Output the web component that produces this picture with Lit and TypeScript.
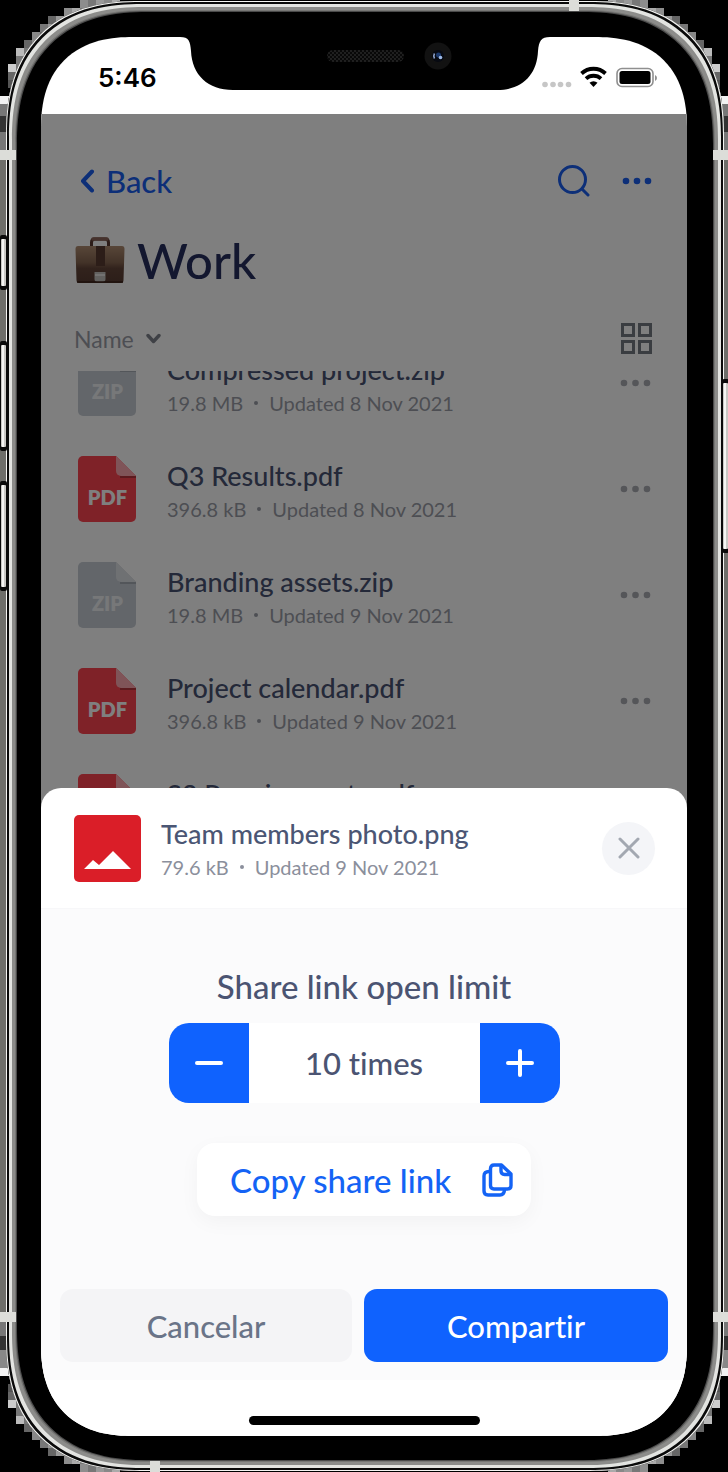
import { LitElement, html, css, svg } from "lit";
import { customElement, property, state } from "lit/decorators.js";

type FileKind = "pdf" | "zip";

interface FileEntry {
  name: string;
  size: string;
  updated: string;
  kind: FileKind;
}

const FILES: FileEntry[] = [
  { name: "Compressed project.zip", size: "19.8 MB", updated: "Updated 8 Nov 2021", kind: "zip" },
  { name: "Q3 Results.pdf", size: "396.8 kB", updated: "Updated 8 Nov 2021", kind: "pdf" },
  { name: "Branding assets.zip", size: "19.8 MB", updated: "Updated 9 Nov 2021", kind: "zip" },
  { name: "Project calendar.pdf", size: "396.8 kB", updated: "Updated 9 Nov 2021", kind: "pdf" },
  { name: "S3 Requirements.pdf", size: "396.8 kB", updated: "Updated 9 Nov 2021", kind: "pdf" },
];

const metaStyles = css`
  .meta {
    display: flex;
    align-items: center;
    gap: 11px;
    font-size: 20px;
    line-height: 32px;
  }
  .dot {
    width: 4px;
    height: 4px;
    border-radius: 50%;
    background: currentColor;
  }
`;

@customElement("file-row")
export class FileRow extends LitElement {
  @property({ attribute: false }) file!: FileEntry;

  static styles = [
    metaStyles,
    css`
      :host {
        display: flex;
        align-items: flex-start;
        height: 106px;
        box-sizing: border-box;
        padding: 20px 36px 0 37px;
      }
      .icon {
        flex: none;
        width: 58px;
        height: 66px;
        margin-right: 31px;
      }
      .label {
        font: 800 20px Lato, sans-serif;
      }
      .text {
        flex: 1;
        padding-top: 3px;
      }
      .name {
        font-size: 27px;
        font-weight: 500;
        line-height: 34px;
        color: #485272;
      }
      .meta {
        color: #9a9da7;
      }
      .more {
        display: block;
        border: 0;
        padding: 0;
        margin-top: 18px;
        height: 30px;
        background: none;
      }
      svg {
        display: block;
      }
      .more svg {
        width: 31px;
        height: 30px;
        fill: #aaacb3;
      }
    `,
  ];

  render() {
    const pdf = this.file.kind === "pdf";
    return html`
      <svg class="icon" viewBox="0 0 58 66" aria-hidden="true">
        <path d="M5 0H38L58 20V61a5 5 0 0 1-5 5H5a5 5 0 0 1-5-5V5a5 5 0 0 1 5-5z" fill=${pdf ? "#ff4450" : "#c6ccd4"} />
        <path d="M38 0L58 20H43a5 5 0 0 1-5-5z" fill=${pdf ? "#ffa8b0" : "#dfe2e6"} />
        <path d="M42 21H58" stroke=${pdf ? "#9a2e36" : "#9a9fa6"} stroke-width="1.4" />
        <text class="label" x="29.500" y="49" text-anchor="middle" fill=${pdf ? "#fff" : "#eff1f3"}>${this.file.kind.toUpperCase()}</text>
      </svg>
      <div class="text">
        <div class="name">${this.file.name}</div>
        <div class="meta"><span>${this.file.size}</span><i class="dot"></i><span>${this.file.updated}</span></div>
      </div>
      <button class="more" aria-label="More options">
        <svg viewBox="0 0 31 30"><circle cx="4" cy="15" r="3.300" /><circle cx="15.500" cy="15" r="3.300" /><circle cx="27" cy="15" r="3.300" /></svg>
      </button>
    `;
  }
}

@customElement("phone-notch")
export class PhoneNotch extends LitElement {
  static styles = css`
    :host {
      display: block;
    }
    svg {
      display: block;
      margin: 0 auto;
    }
  `;

  render() {
    return html`
      <svg width="370" height="55" viewBox="0 0 370 55" aria-hidden="true">
        <defs>
          <pattern id="mesh" width="4" height="4" patternUnits="userSpaceOnUse">
            <rect width="4" height="4" fill="#080808" />
            <circle cx="1" cy="1" r="0.900" fill="#2a2a2a" />
            <circle cx="3" cy="3" r="0.900" fill="#2a2a2a" />
          </pattern>
        </defs>
        <path d="M0 0H370V1C361 1 359 5 358 15C357 39 342 54 317 54H53C28 54 12 39 11 15C10 5 9 1 0 1z" />
        <rect x="147" y="14" width="77" height="12" rx="6" fill="url(#mesh)" />
        <circle cx="258" cy="20" r="13.500" fill="#121212" />
        <circle cx="258" cy="20" r="6" fill="#070a12" />
        <path d="M254.500 17.500q-1.500 2.500 0 5" stroke="#8ba0c8" stroke-width="1.600" fill="none" />
        <circle cx="258.500" cy="19" r="2.500" fill="#1c3a6e" />
        <circle cx="260.500" cy="21.500" r="1.800" fill="#9db9e6" />
      </svg>
    `;
  }
}

@customElement("app-root")
export class AppRoot extends LitElement {
  @state() private limit = 10;

  static styles = [
    metaStyles,
    css`
      :host {
        display: block;
        background: #000;
        font-family: Lato, "Noto Sans", sans-serif;
        font-variant-ligatures: none;
      }
      svg {
        display: block;
      }
      button {
        font-family: inherit;
        font-variant-ligatures: inherit;
        border: 0;
        margin: 0;
        padding: 0;
        background: none;
        cursor: pointer;
      }
      .stage {
        position: relative;
        padding: 1px 4px 1px 6px;
      }
      .backdrop {
        position: absolute;
        inset: 0;
        width: 100%;
        height: 100%;
      }
      .phone {
        position: relative;
        padding: 36px 37px 35px 35px;
        border-radius: 118px;
        background: #000;
        box-shadow:
          inset 0 0 0 1px #f4f4f2,
          inset 0 0 0 3px #0a0a0a,
          inset 0 0 0 6px #e3e4e1,
          inset 0 0 0 9px #8c8c8a,
          inset 0 0 0 10px #777775,
          inset 0 0 0 11px #4a4a4a;
      }
      .notch {
        position: absolute;
        top: 35px;
        left: 0;
        right: 0;
      }
      .screen {
        display: flex;
        flex-direction: column;
        overflow: hidden;
        border-radius: 80px;
        background: #fff;
      }
      @supports (corner-shape: superellipse(1.25)) {
        .phone {
          border-radius: 134px;
          corner-shape: superellipse(1.25);
        }
        .screen {
          border-radius: 92px;
          corner-shape: superellipse(1.25);
        }
      }
      .status {
        display: flex;
        align-items: center;
        height: 77px;
        box-sizing: border-box;
        padding: 4px 30px 0 57px;
      }
      .time {
        flex: 1;
        font: 600 26px/30px Inter, sans-serif;
        color: #000;
      }
      .app {
        position: relative;
        display: flex;
        flex-direction: column;
        background: #fff;
      }
      .scrim {
        position: absolute;
        inset: 0;
        background: rgba(0, 0, 0, 0.5);
      }
      .nav {
        display: flex;
        align-items: center;
        height: 60px;
        padding: 37px 35px 0 38px;
        color: #1a5ff0;
      }
      .back {
        display: flex;
        align-items: center;
        gap: 11px;
        margin-right: auto;
        font-size: 31px;
        font-weight: 500;
        line-height: 36px;
        color: inherit;
        text-decoration: none;
      }
      .nav button {
        color: inherit;
      }
      .search {
        margin-right: 32px;
      }
      .heading {
        display: flex;
        align-items: center;
        gap: 12px;
        height: 60px;
        padding: 19px 33px 2px 34px;
      }
      .title {
        margin: 0;
        font-size: 49px;
        font-weight: 500;
        line-height: 60px;
        color: #262f5e;
      }
      .sort {
        display: flex;
        justify-content: space-between;
        align-items: center;
        height: 65px;
        padding: 14px 35px 0 33px;
      }
      .sort-by {
        display: flex;
        align-items: center;
        gap: 12px;
        font-size: 23px;
        line-height: 30px;
        color: #9a9da7;
      }
      .files {
        height: 437px;
        overflow: hidden;
      }
      .files-inner {
        margin-top: -41px;
      }
      .sheet {
        position: relative;
        margin-top: -20px;
        border-radius: 20px 20px 0 0;
        background: #fff;
      }
      .sheet-head {
        display: flex;
        align-items: center;
        height: 120px;
        padding: 0 32px 0 33px;
        border-bottom: 1px solid #f7f7f9;
      }
      .sheet-text {
        flex: 1;
        margin-left: 20px;
        padding-top: 4px;
      }
      .sheet-name {
        margin: 0;
        font-size: 27px;
        font-weight: 500;
        line-height: 34px;
        color: #4b5674;
      }
      .meta {
        color: #8b8f9c;
      }
      .close {
        display: grid;
        place-items: center;
        width: 53px;
        height: 53px;
        border-radius: 50%;
        background: #f4f5f8;
      }
      .sheet-body {
        display: flex;
        flex-direction: column;
        align-items: center;
        padding: 56px 19px 18px;
        background: #fbfbfc;
      }
      .limit-label {
        font-size: 33px;
        font-weight: 500;
        line-height: 42px;
        color: #4b5472;
      }
      .stepper {
        display: flex;
        width: 391px;
        height: 80px;
        margin-top: 16px;
        overflow: hidden;
        border-radius: 20px;
        background: #fff;
      }
      .step {
        display: grid;
        place-items: center;
        width: 80px;
        background: #0f62fe;
      }
      .value {
        flex: 1;
        text-align: center;
        font-size: 31px;
        font-weight: 500;
        line-height: 80px;
        color: #4b5472;
      }
      .copy {
        display: flex;
        align-items: center;
        justify-content: space-between;
        width: 334px;
        height: 73px;
        margin-top: 40px;
        padding: 0 18px 0 33px;
        border-radius: 18px;
        background: #fff;
        box-shadow: 0 6px 20px rgba(0, 0, 0, 0.04);
        font-size: 33px;
        font-weight: 500;
        color: #1463f5;
      }
      .actions {
        display: flex;
        gap: 12px;
        align-self: stretch;
        margin-top: 73px;
      }
      .action {
        flex: 292;
        height: 73px;
        border-radius: 13px;
        background: #f4f4f6;
        font-size: 31px;
        font-weight: 500;
        color: #6a7488;
      }
      .primary {
        flex: 304;
        background: #0f62fe;
        color: #fff;
      }
      .home {
        display: flex;
        justify-content: center;
        padding: 36px 0 11px;
      }
      .home-bar {
        width: 231px;
        height: 9px;
        border-radius: 5px;
        background: #000;
      }
    `,
  ];

  /* Stepped pixels behind the rounded corners and along the sides. */
  private renderBackdrop() {
    const steps: [number, number, string][] = [
      [80, 0, "#8d8d8d"], [88, 0, "#777"], [96, 0, "#999"], [104, 0, "#888"], [112, 0, "#aaa"],
      [64, 8, "#8d8d8d"], [72, 8, "#aaa"], [80, 8, "#777"],
      [48, 16, "#666"], [56, 16, "#999"], [64, 16, "#777"],
      [40, 24, "#777"], [48, 24, "#999"],
      [32, 32, "#888"], [40, 32, "#666"],
      [24, 40, "#666"], [32, 40, "#8d8d8d"],
      [16, 48, "#bbb"], [24, 48, "#777"],
      [16, 56, "#777"],
      [8, 64, "#ccc"], [16, 64, "#777"],
      [8, 72, "#666"], [8, 80, "#555"],
    ];
    const corner = () => steps.map(([x, y, c]) => svg`<rect x=${x} y=${y} width="8" height="8" fill=${c} />`);
    return html`
      <svg class="backdrop" viewBox="0 0 728 1472" preserveAspectRatio="none" aria-hidden="true">
        <g>${corner()}</g>
        <g transform="translate(728 0) scale(-1 1)">${corner()}</g>
        <g transform="translate(0 1472) scale(1 -1)">${corner()}</g>
        <g transform="translate(728 1472) scale(-1 -1)">${corner()}</g>
        <rect y="96" width="728" height="1280" fill="#6e6e6a" />
        <rect y="96" width="728" height="8" fill="#f2f2f2" />
        <rect y="104" width="728" height="12" fill="#777" />
        <rect y="116" width="728" height="16" fill="#333" />
        <rect y="132" width="728" height="18" fill="#777" />
        <rect y="1322" width="728" height="14" fill="#777" />
        <rect y="1336" width="728" height="14" fill="#333" />
        <rect y="1350" width="728" height="18" fill="#888" />
        <rect y="1368" width="728" height="8" fill="#f2f2f2" />
      </svg>
    `;
  }

  /* Side keys and antenna bands that sit over the metal edge. */
  private renderHardware() {
    const key = (x: number, y: number, h: number) => svg`
      <rect x=${x} y=${y} width="7" height=${h} rx="2" fill="#0a0a0a" />
      <rect x=${x + 1} y=${y + 4} width="5" height=${h - 8} rx="1" fill="#c9c8c4" />
      <rect x=${x + 2} y=${y + 4} width="2" height=${h - 8} fill="#f5f5f3" />`;
    return html`
      <svg class="backdrop" viewBox="0 0 728 1472" preserveAspectRatio="none" aria-hidden="true">
        ${key(0, 235, 55)} ${key(0, 341, 110)} ${key(0, 481, 110)} ${key(722, 379, 174)}
        <g fill="#dcddd9">
          <rect x="0" y="150" width="16" height="10" />
          <rect x="713" y="150" width="15" height="10" />
          <rect x="0" y="1312" width="16" height="10" />
          <rect x="713" y="1312" width="15" height="10" />
          <rect x="569" y="0" width="10" height="11" />
          <rect x="150" y="1461" width="10" height="11" />
        </g>
      </svg>
    `;
  }

  private renderStatus() {
    return html`
      <div class="status">
        <span class="time">5:46</span>
        <svg width="116" height="24" viewBox="0 0 116 24" role="img" aria-label="Wi-Fi connected, battery full">
          <g fill="#c6c6c6"><circle cx="4" cy="18.500" r="2.800" /><circle cx="12" cy="18.500" r="2.800" /><circle cx="19.500" cy="18.500" r="2.800" /><circle cx="27.500" cy="18.500" r="2.800" /></g>
          <g fill="none" stroke="#000" stroke-width="3.800">
            <path d="M40.500 7.500a17.500 17.500 0 0 1 24 0" />
            <path d="M45 12.700a11 11 0 0 1 15 0" />
          </g>
          <path d="M52.500 21l-4-4.300a6 6 0 0 1 8 0z" />
          <rect x="76" y="2.500" width="36" height="18" rx="5" fill="none" stroke="#8f8f8f" stroke-width="1.600" />
          <rect x="78.500" y="5" width="31" height="13" rx="2.500" />
          <path d="M114 9q2 1 2 3t-2 3z" fill="#8f8f8f" />
        </svg>
      </div>
    `;
  }

  private renderBriefcase() {
    return html`
      <svg width="50" height="46" viewBox="0 0 50 46" aria-hidden="true">
        <defs>
          <linearGradient id="leather" x1="0" y1="0" x2="0" y2="1">
            <stop offset="0" stop-color="#b08d72" /><stop offset="0.450" stop-color="#856550" /><stop offset="0.600" stop-color="#64463a" /><stop offset="1" stop-color="#583c32" />
          </linearGradient>
        </defs>
        <path d="M16.500 9V5.500Q16.500 2 20 2H30Q33.500 2 33.500 5.500V9" fill="none" stroke="#5a3a32" stroke-width="3" />
        <path d="M18 2H32" stroke="#8d655a" stroke-width="3.500" stroke-linecap="round" />
        <path d="M3 9H47Q49.500 9 49.500 12L48.500 43Q48.500 46 46 46H4Q1.500 46 1.500 43L.5 12Q.5 9 3 9z" fill="url(#leather)" />
        <rect x="21" y="9" width="9" height="20" fill="#583a30" />
        <path d="M19.500 35H30.500V42Q30.500 45 27.500 45H22.500Q19.500 45 19.500 42z" fill="#c5c3bf" />
        <path d="M20 38H30" stroke="#efeeeb" stroke-width="1.600" />
        <path d="M2 45H48" stroke="#3c231a" stroke-width="1.500" />
      </svg>
    `;
  }

  render() {
    return html`
      <div class="stage">
        ${this.renderBackdrop()}
        <div class="phone">
          <main class="screen">
            ${this.renderStatus()}
            <section class="app">
              <nav class="nav">
                <a class="back" href="#">
                  <svg width="16" height="24" viewBox="0 0 16 24" fill="none" stroke="currentColor" stroke-width="4" stroke-linecap="round" stroke-linejoin="round"><path d="M13 2.500L4 12L13 21.500" /></svg>
                  Back
                </a>
                <button class="search" aria-label="Search">
                  <svg width="32" height="32" viewBox="0 0 32 32" fill="none" stroke="currentColor" stroke-width="3" stroke-linecap="round"><circle cx="14.500" cy="14.500" r="13" /><path d="M24 24L30 30" /></svg>
                </button>
                <button aria-label="More">
                  <svg width="30" height="30" viewBox="0 0 30 30" fill="currentColor"><circle cx="4" cy="15" r="3.300" /><circle cx="15" cy="15" r="3.300" /><circle cx="26" cy="15" r="3.300" /></svg>
                </button>
              </nav>
              <header class="heading">${this.renderBriefcase()}<h1 class="title">Work</h1></header>
              <div class="sort">
                <button class="sort-by">Name
                  <svg width="15" height="11" viewBox="0 0 15 11" fill="none" stroke="#7f838c" stroke-width="3.400" stroke-linecap="round" stroke-linejoin="round"><path d="M2 2.500L7.500 8.500L13 2.500" /></svg>
                </button>
                <button aria-label="Grid view">
                  <svg width="31" height="31" viewBox="0 0 31 31" fill="none" stroke="#757a83" stroke-width="3">
                    <rect x="1.500" y="1.500" width="11" height="11" /><rect x="18.500" y="1.500" width="11" height="11" /><rect x="1.500" y="18.500" width="11" height="11" /><rect x="18.500" y="18.500" width="11" height="11" />
                  </svg>
                </button>
              </div>
              <div class="files"><div class="files-inner">${FILES.map((file) => html`<file-row .file=${file}></file-row>`)}</div></div>
              <div class="scrim"></div>
            </section>
            <section class="sheet" role="dialog" aria-label="Share">
              <header class="sheet-head">
                <svg width="67" height="67" viewBox="0 0 67 67" aria-hidden="true"><rect width="67" height="67" rx="5" fill="#da1e28" /><path d="M10 54L19 45L25 50L39 36L57 54z" fill="#fff" /></svg>
                <div class="sheet-text">
                  <h2 class="sheet-name">Team members photo.png</h2>
                  <div class="meta"><span>79.6 kB</span><i class="dot"></i><span>Updated 9 Nov 2021</span></div>
                </div>
                <button class="close" aria-label="Close">
                  <svg width="22" height="22" viewBox="0 0 22 22" stroke="#a3a8b1" stroke-width="3" stroke-linecap="round"><path d="M2 2L20 20M20 2L2 20" /></svg>
                </button>
              </header>
              <div class="sheet-body">
                <span class="limit-label" id="limit-label">Share link open limit</span>
                <div class="stepper" role="group" aria-labelledby="limit-label">
                  <button class="step" aria-label="Decrease" @click=${() => (this.limit = Math.max(1, this.limit - 1))}>
                    <svg width="30" height="30" viewBox="0 0 30 30" stroke="#fff" stroke-width="4" stroke-linecap="round"><path d="M3 15H27" /></svg>
                  </button>
                  <output class="value">${this.limit} times</output>
                  <button class="step" aria-label="Increase" @click=${() => (this.limit += 1)}>
                    <svg width="30" height="30" viewBox="0 0 30 30" stroke="#fff" stroke-width="4" stroke-linecap="round"><path d="M3 15H27M15 3V27" /></svg>
                  </button>
                </div>
                <button class="copy">Copy share link
                  <svg width="31" height="34" viewBox="0 0 31 34" fill="none" stroke="currentColor" stroke-width="3.400" stroke-linejoin="round" stroke-linecap="round">
                    <path d="M12 2H19.500L29 11V22.500Q29 26 25.500 26H12Q8.500 26 8.500 22.500V5.500Q8.500 2 12 2z" />
                    <path d="M19 2.500V8Q19 11.500 22.500 11.500H28" />
                    <path d="M7 8.500Q2 8.500 2 13V28Q2 32 6 32H18Q22 32 22.500 27" />
                  </svg>
                </button>
                <div class="actions">
                  <button class="action">Cancelar</button>
                  <button class="action primary">Compartir</button>
                </div>
              </div>
              <div class="home"><div class="home-bar"></div></div>
            </section>
          </main>
          <phone-notch class="notch"></phone-notch>
        </div>
        ${this.renderHardware()}
      </div>
    `;
  }
}
